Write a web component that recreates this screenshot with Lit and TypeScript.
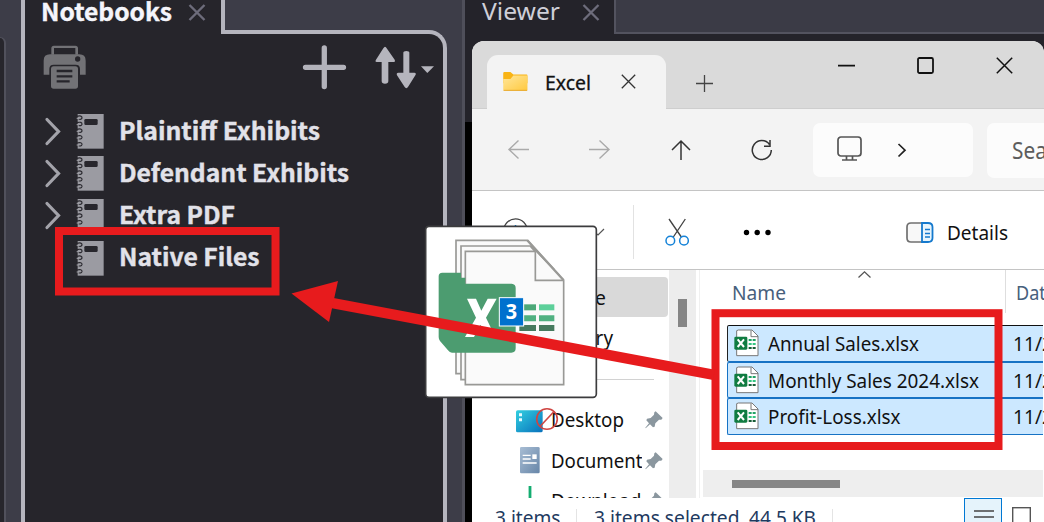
import { LitElement, html, svg, css } from "lit";
import { customElement } from "lit/decorators.js";

/** Single-line label fitted to an exact width; its box is as tall as the capitals. */
const label = (text: string, width: number, cap: number, cls = "ui") => html`
  <svg class="label ${cls}" width=${width} height=${cap}>
    <text x="0" y=${cap} textLength=${width} lengthAdjust="spacingAndGlyphs">${text}</text>
  </svg>`;

const shared = css`
  :host { display: block; box-sizing: border-box; }
  * { box-sizing: border-box; }
  svg { display: block; flex: none; overflow: visible; }
  .label text { fill: #111; font-family: "Noto Sans", "Open Sans", sans-serif; font-size: 20px; }
`;

@customElement("notebook-panel")
class NotebookPanel extends LitElement {
  static styles = [shared, css`
    :host { width: 426px; height: 522px; }
    .frame { display: grid; grid-template-columns: 204px 222px; grid-template-rows: 34px 488px; }
    .tab { width: 204px; background: #26252b; border-left: 4px solid #b5b5be; border-right: 4px solid #b5b5be; height: 30px; padding: 3px 0 0 16px; display: flex; gap: 16px; }
    .tab .label text { font-family: "Noto Sans CJK SC", sans-serif; font-weight: 700; font-size: 24px; fill: #f5f5fb; stroke: #f5f5fb; stroke-width: .4px; }
    .tabrow { grid-column: 1 / 3; display: flex; height: 30px; }
    .body { grid-column: 1 / 3; margin-top: -4px; height: 492px; background: #26252b; border: 4px solid #b5b5be; border-bottom: 0; border-radius: 0 18px 0 0; }
    .opening { width: 196px; height: 5px; margin-top: -5px; background: #26252b; }
    .tools { height: 80px; display: flex; padding: 10.500px 0 0 18px; }
    .add { margin-left: 216.500px; }
    .sort { margin-left: 29px; }
    .row { height: 42.300px; display: flex; padding-left: 18.500px; }
    .row .book { margin-left: 13.500px; }
    .row .label { margin: 8.600px 0 0 14.500px; }
    .row .label text { font-family: "Noto Sans CJK SC", sans-serif; font-weight: 700; font-size: 24px; fill: #e2e2e9; stroke: #e2e2e9; stroke-width: .4px; }
    .chev { margin-top: 1.500px; }
    .hidden { visibility: hidden; }
  `];
  row(text: string, width: number, open = true) {
    return html`<div class="row">
      <svg class="chev ${open ? "" : "hidden"}" width="20" height="30" viewBox="0 0 20 30"><path d="M3 3.500 14.500 15.500 3 27.500" fill="none" stroke="#a3a3aa" stroke-width="3.200" stroke-linecap="round"/></svg>
      <svg class="book" width="27" height="35" viewBox="0 0 81 105">
        <path d="M2 0H80V104H2Z" fill="#9b9ba2"/><rect x="22" y="15" width="40" height="18" rx="4" fill="#28272d"/>
        ${[12, 31, 51, 71, 92].map((y) => svg`<path d="M-1 ${y - 5}Q16 ${y - 9} 15 ${y}Q13 ${y + 6} 5 ${y + 3}" fill="none" stroke="#29282e" stroke-width="3.500"/><path d="M-1 ${y + 1}H8" stroke="#a1a1a8" stroke-width="3"/>`)}
      </svg>
      ${label(text, width, 17.4)}
    </div>`;
  }
  render() {
    return html`<div class="frame">
      <div class="tabrow"><div class="tab">${label("Notebooks", 131, 17.5)}
        <svg width="18" height="18" viewBox="0 0 18 18"><path d="M1.500 2 16.500 17M16.500 2 1.500 17" stroke="#6d6c7b" stroke-width="2.400"/></svg></div></div>
      <div class="body"><div class="opening"></div>
        <div class="tools">
          <svg width="43" height="44" viewBox="130 135 129 132">
            <path d="M155 164V145Q155 137 163 137H227Q235 137 235 145V164H227V144H163V164Z" fill="#727276"/>
            <path d="M132 224V182Q132 163 151 163H239Q258 163 258 182V224H241V207Q241 194 228 194H162Q149 194 149 207V224Z" fill="#727276"/>
            <circle cx="234" cy="177" r="8" fill="#26252b"/><rect x="154" y="199" width="81" height="67" rx="8" fill="#727276"/>
            <path d="M171 213H218M171 229H218M171 244H210" stroke="#26252b" stroke-width="7"/>
          </svg>
          <svg class="add" width="43" height="44" viewBox="0 0 43 44"><path d="M21.300 3V41.500M2.500 22.300H40.500" stroke="#b3b3bb" stroke-width="5.300" stroke-linecap="round"/></svg>
          <svg class="sort" width="60" height="44" viewBox="469 137 180 132"><g fill="#b5b5bd"><path d="M499 142Q502 143 504 147L528 181Q531 188 524 188H509V245Q509 253 499 253T489 245V188H474Q468 187 472 181L494 147Q497 143 499 142Z"/><path d="M563 267Q560 266 558 263L535 228Q532 220 539 220H554V160Q554 155 563 155T572 160V220H587Q594 221 590 228L568 263Q566 266 563 267Z"/><path d="M607 201H646L626 221Z"/></g></svg>
        </div>
        ${this.row("Plaintiff Exhibits", 201, true)}
        ${this.row("Defendant Exhibits", 230, true)}
        ${this.row("Extra PDF", 116, true)}
        ${this.row("Native Files", 140.5, false)}
      </div></div>`;
  }
}

const excelIcon = html`<svg class="xl" width="25" height="28" viewBox="103 83 75 84">
  <path d="M116 86H157L175 104V163H111V88Z" fill="#fff" stroke="#777" stroke-width="3"/><path d="M154 87V106H175" fill="none" stroke="#777" stroke-width="3"/>
  <rect x="104" y="106" width="39" height="39" rx="4" fill="#107c41"/><path d="M114 114 133 137M133 114 114 137" stroke="#fff" stroke-width="6"/>
  <path d="M147 116H156M159 116H168" stroke="#21a366" stroke-width="6"/><path d="M147 128H156M159 128H168" stroke="#33c481" stroke-width="6"/><path d="M147 140H156M159 140H168" stroke="#185c37" stroke-width="6"/></svg>`;
const pin = html`<svg class="pin" width="18" height="18" viewBox="556 121 54 54"><path d="M588 122 609 142 605 147 598 147 587 158 585 168 580 170 571 161 558 173 557 171 568 158 560 149 562 144 573 142 583 132 584 125Z" fill="#8b979f"/></svg>`;

@customElement("file-explorer")
class FileExplorer extends LitElement {
  static styles = [shared, css`
    :host { width: 572px; height: 481px; background: #fff; border-radius: 12px 12px 0 0; overflow: hidden; }
    .title { height: 68px; background: #dadada; border-bottom: 1px solid #cecece; display: flex; }
    .tab { width: 179px; height: 54px; margin: 14px 0 0 14.500px; background: #f3f3f3; border-radius: 11px 11px 0 0; display: flex; padding: 17px 0 0 16px; flex: none; }
    .tab .label { margin: 3px 0 0 17.500px; }
    .tab .label text { font-size: 20.500px; stroke: #111; stroke-width: .3px; }
    .tab .x { margin: 2px 0 0 30px; }
    .plus { margin: 34px 0 0 30.500px; }
    .min { margin: 23.500px 0 0 125px; }
    .max { margin: 16px 0 0 61.500px; }
    .close { margin: 16px 0 0 62.500px; }
    .nav { height: 82px; background: #f3f3f3; border-bottom: 1.500px solid #c4c4c4; display: flex; }
    .nav > svg { margin-top: 30px; }
    .back { margin-left: 35px; } .fwd { margin-left: 60px; } .up { margin-left: 59.500px; } .ref { margin-left: 60.500px; }
    .addr { width: 160px; height: 54px; margin: 13.500px 0 0 41px; background: #fcfcfc; border-radius: 7px; display: flex; padding: 13.500px 0 0 24px; flex: none; }
    .addr .ch { margin: 6.500px 0 0 35px; }
    .search { width: 70px; height: 55.500px; margin: 13.500px 0 0 13.500px; background: #fcfcfc; border-radius: 7px; padding: 19px 0 0 25px; flex: none; }
    .search text { fill: #5d5d5d; font-size: 23px; }
    .bar { height: 79px; border-bottom: 1.500px solid #c4c4c4; display: flex; }
    .new { margin: 27px 0 0 31px; }
    .bar .t1 { margin: 34px 0 0 17px; }
    .nch { margin: 37px 0 0 5px; }
    .sep { width: 1px; height: 54px; margin: 14px 0 0 29px; background: #e2e2e2; }
    .cut { margin: 27px 0 0 31px; }
    .dots { margin: 38px 0 0 52.500px; }
    .det { margin: 30.500px 0 0 135px; }
    .bar .t2 { margin: 35px 0 0 13px; }
    .main { height: 228px; display: flex; overflow: hidden; }
    .side { width: 197px; height: 228px; overflow: hidden; flex: none; padding-top: 7px; }
    .home { margin-left: 10px; width: 186px; height: 40px; border-radius: 4px; background: #d9d9d9; padding: 13.500px 0 0 69px; }
    .gal { height: 62px; padding: 14px 0 0 79px; }
    .line { width: 154px; height: 1px; background: #d2d2d2; margin-left: 28px; }
    .item { height: 40.700px; margin-left: 44px; display: flex; }
    .desk { margin-top: 20px; }
    .item .name { width: 91px; overflow: hidden; padding: 13px 0 0 .5px; height: 38px; margin-left: 8.500px; flex: none; }
    .item .pin { margin: 11px 0 0 3.500px; }
    .vs { width: 27px; background: #ededed; padding: 28.500px 0 0 9px; flex: none; }
    .thumb { width: 8.500px; height: 28.500px; background: #868686; }
    .list { width: 344px; margin-left: 3px; border-left: 1.500px solid #f0f0f0; display: flex; flex-direction: column; flex: none; }
    .head { height: 55px; display: flex; padding-left: 32px; flex: none; }
    .head .label { margin-top: 14.800px; }
    .head text { fill: #47607c; }
    .asc { margin: 1px 0 0 72px; }
    .hs { width: 1px; height: 43px; background: #dedede; margin: 0 10px 0 133.500px; flex: none; }
    .file { height: 36.700px; margin-left: 27px; border: 1px solid #1672c4; border-width: 1px 0 1px 1.500px; border-radius: 2px 0 0 2px; background: #cce8ff; display: flex; padding: 3px 0 0 6px; flex: none; }
    .file.first { border-top: 1.500px solid #111; border-left-color: #222; }
    .file .label { margin: 8px 0 0 8.500px; }
    .fn { width: 245.500px; flex: none; }
    .hbar { margin: 35px 0 0 3px; height: 27px; background: #eee; padding: 9.500px 0 0 28.500px; flex: none; }
    .hthumb { height: 8px; width: 108px; background: #868686; }
    .status { height: 25px; display: flex; }
    .status .label { margin-top: 12.800px; }
    .status text { fill: #1e3a60; }
    .sv { width: 1px; height: 14px; margin-top: 11px; background: #e4e4e4; }
    .view { width: 38px; height: 40px; margin-left: 131px; border: 1.500px solid #0078d4; background: #e5f3fb; padding: 10.500px 0 0 9.500px; flex: none; }
    .sq { margin: 8px 0 0 10px; }
  `];
  file(name: string, w: number, first = false) {
    return html`<div class="file ${first ? "first" : ""}">${excelIcon}<div class="fn">${label(name, w, 14.3)}</div>${label("11/2", 40, 14.3)}</div>`;
  }
  render() {
    return html`
      <div class="title">
        <div class="tab">
          <svg width="25" height="19" viewBox="129 126 75 58"><defs><linearGradient id="f" x2="1" y2="1"><stop stop-color="#ffe69a"/><stop offset="1" stop-color="#ffc93f"/></linearGradient></defs><path d="M129 130Q129 126 133 126H151L160 134H200Q203 134 203 138V160H129Z" fill="#f9b415"/><path d="M129 147H151L160 137H203V180Q203 183 199 183H133Q129 183 129 179Z" fill="url(#f)"/><path d="M130 182H202" stroke="#e7a72c" stroke-width="3"/></svg>
          ${label("Excel", 46, 15)}
          <svg class="x" width="15" height="15"><path d="M.8.800 14.200 14.200M14.200.800.800 14.200" stroke="#333" stroke-width="1.300"/></svg>
        </div>
        <svg class="plus" width="17" height="17"><path d="M8.500 0V17M0 8.500H17" stroke="#444" stroke-width="1.300"/></svg>
        <svg class="min" width="17" height="2"><path d="M0 .6H17" stroke="#111" stroke-width="1.700"/></svg>
        <svg class="max" width="17" height="17"><rect x="1" y="1" width="15" height="15" rx="1.500" fill="none" stroke="#111" stroke-width="1.800"/></svg>
        <svg class="close" width="17" height="17"><path d="M.8.800 16.200 16.200M16.200.800.800 16.200" stroke="#111" stroke-width="1.500"/></svg>
      </div>
      <div class="nav">
        <svg class="back" width="22" height="20"><path d="M22 10.500H2M11.500 1.500 2 10.500 11.500 19.500" fill="none" stroke="#aaa" stroke-width="1.400"/></svg>
        <svg class="fwd" width="22" height="20"><path d="M0 10.500H20M10.500 1.500 20 10.500 10.500 19.500" fill="none" stroke="#aaa" stroke-width="1.400"/></svg>
        <svg class="up" width="20" height="21"><path d="M10 21V2M1 11 10 2 19 11" fill="none" stroke="#333" stroke-width="1.500"/></svg>
        <svg class="ref" width="21" height="21"><path d="M18.500 5.500A9.500 9.500 0 1 0 20.300 11M19 1V7.200H13" fill="none" stroke="#333" stroke-width="1.500"/></svg>
        <div class="addr">
          <svg width="25" height="25"><rect x="1" y="1" width="23" height="19" rx="3" fill="none" stroke="#555" stroke-width="1.700"/><path d="M9.500 20V24M15.500 20V24M5 24H20" stroke="#555" stroke-width="1.700"/></svg>
          <svg class="ch" width="9" height="14"><path d="M1.500 1 8 7.200 1.500 13.500" fill="none" stroke="#222" stroke-width="1.700"/></svg>
        </div>
        <div class="search">${label("Search", 66, 16.5)}</div>
      </div>
      <div class="bar">
        <svg class="new" width="25" height="25"><circle cx="12.500" cy="12.500" r="11.700" fill="none" stroke="#444" stroke-width="1.300"/><path d="M12.500 7V18M7 12.500H18" stroke="#0078d4" stroke-width="1.500"/></svg>
        <div class="t1">${label("New", 40, 15.5)}</div>
        <svg class="nch" width="14" height="8"><path d="M1 1 8 7 14 1" fill="none" stroke="#555" stroke-width="1.200"/></svg>
        <div class="sep"></div>
        <svg class="cut" width="25" height="28" viewBox="196 84 75 84"><path d="M208 87 245 141M257 87 221 141" stroke="#444" stroke-width="4"/><circle cx="212" cy="152" r="13" fill="#fff" stroke="#1683d8" stroke-width="4.500"/><circle cx="253" cy="152" r="13" fill="#fff" stroke="#1683d8" stroke-width="4.500"/></svg>
        <svg class="dots" width="28" height="6"><circle cx="3.500" cy="3.500" r="2.700"/><circle cx="14.200" cy="3.500" r="2.700"/><circle cx="25" cy="3.500" r="2.700"/></svg>
        <svg class="det" width="28" height="21"><path d="M16 1H5Q1 1 1 5V16Q1 20 5 20H16" fill="#f8f8f8" stroke="#707070" stroke-width="1.700"/><path d="M16 1H22Q26.500 1 26.500 5V16Q26.500 20 22 20H16Z" fill="#e8f5fc" stroke="#1579cd" stroke-width="1.800"/><path d="M19 7.500H24M19 11.500H24M19 15H24" stroke="#1579cd" stroke-width="1.300"/></svg>
        <div class="t2">${label("Details", 61, 14.3)}</div>
      </div>
      <div class="main">
        <div class="side">
          <div class="home">${label("Home", 55, 14.3)}</div>
          <div class="gal">${label("Gallery", 62, 14.3)}</div>
          <div class="line"></div>
          <div class="item desk">
            <svg width="26" height="41" viewBox="168 103 78 123"><defs><linearGradient id="d" x2="1" y2="1"><stop stop-color="#32cfe0"/><stop offset="1" stop-color="#0871bc"/></linearGradient></defs><rect x="168" y="134" width="80" height="66" rx="5" fill="url(#d)"/><path d="M177 143H186V152H177ZM177 158H186V167H177Z" fill="#e9fbff"/></svg>
            <div class="name">${label("Desktop", 73, 14.3)}</div>${pin}
          </div>
          <div class="item">
            <svg width="26" height="41" viewBox="168 212 78 123"><defs><linearGradient id="o" x2="1" y2="1"><stop stop-color="#a8bdd4"/><stop offset="1" stop-color="#6786a8"/></linearGradient></defs><rect x="180" y="230" width="59" height="79" rx="4" fill="url(#o)"/><path d="M188 255H212M188 266H212M188 278H230" stroke="#fff" stroke-width="4"/><rect x="217" y="252" width="13" height="14" fill="#fff"/></svg>
            <div class="name">${label("Documents", 100.5, 14.3)}</div>${pin}
          </div>
          <div class="item">
            <svg width="26" height="41"><path d="M14 5V27M7 20 14 27 21 20" fill="none" stroke="#14ad71" stroke-width="2.800"/></svg>
            <div class="name">${label("Downloads", 99.5, 14.3)}</div>${pin}
          </div>
        </div>
        <div class="vs"><div class="thumb"></div></div>
        <div class="list">
          <div class="head">${label("Name", 54, 14.5)}
            <svg class="asc" width="13" height="7"><path d="M.5 6.500 6.500.8 12.500 6.500" fill="none" stroke="#555" stroke-width="1.300"/></svg>
            <div class="hs"></div>${label("Date", 40, 14.5)}</div>
          ${this.file("Annual Sales.xlsx", 151, true)}
          ${this.file("Monthly Sales 2024.xlsx", 211, false)}
          ${this.file("Profit-Loss.xlsx", 132.5, false)}
          <div class="hbar"><div class="hthumb"></div></div>
        </div>
      </div>
      <div class="status">
        <svg width="23" height="1"></svg>${label("3 items", 65.5, 14.3)}<svg width="15.500" height="1"></svg><div class="sv"></div>
        <svg width="16.500" height="1"></svg>${label("3 items selected", 145.500, 14.3)}<svg width="9.500" height="1"></svg>${label("44.5 KB", 67, 14.3)}<svg width="16" height="1"></svg><div class="sv"></div>
        <div class="view"><svg width="20" height="13"><path d="M0 1H20M0 7H20M0 13H20" stroke="#444" stroke-width="1.300"/></svg></div>
        <svg class="sq" width="19" height="20"><rect x=".7" y="1.700" width="17.600" height="18" fill="#fff" stroke="#555" stroke-width="1.400"/></svg>
      </div>`;
  }
}

@customElement("app-root")
class AppRoot extends LitElement {
  static styles = [shared, css`
    :host { width: 1044px; height: 522px; position: relative; overflow: hidden; background: #3d3d48; }
    .shell { display: flex; height: 522px; }
    .edge { width: 6px; height: 490px; margin: 37px 15px 0 0; background: #27262c; border: 2px solid #51515c; border-width: 1.500px 2px 0 0; border-radius: 0 7px 0 0; flex: none; }
    notebook-panel { flex: none; }
    .viewer { margin-left: 15px; width: 582px; background: #000; border-left: 3px solid #4f4f5a; flex: none; }
    .vtop { height: 122px; background: #24232a; }
    .vtabs { height: 34px; display: flex; }
    .vtab { width: 149px; padding: 3px 0 0 16.500px; display: flex; gap: 22px; flex: none; }
    .vtab .label text { font-size: 24px; fill: #cfcfd8; }
    .vrest { flex: 1; background: #3b3b46; border-left: 2px solid #53535f; border-bottom: 2px solid #53535f; }
    file-explorer { position: absolute; left: 472px; top: 41px; }
    .overlay { position: absolute; left: 0; top: 0; }
    .badge { fill: #fff; font: 700 66px "Noto Sans", sans-serif; }
  `];
  render() {
    return html`
      <div class="shell">
        <div class="edge"></div>
        <notebook-panel></notebook-panel>
        <div class="viewer"><div class="vtop"><div class="vtabs">
          <div class="vtab">${label("Viewer", 78, 17.3)}<svg width="18" height="18"><path d="M1.500 2 16.500 17M16.500 2 1.500 17" stroke="#6d6c7b" stroke-width="2.300"/></svg></div>
          <div class="vrest"></div></div></div></div>
      </div>
      <file-explorer></file-explorer>
      <svg class="overlay" width="1044" height="522" viewBox="0 0 1044 522">
        <g fill="none" stroke="#cf4542" stroke-width="1.600"><circle cx="547" cy="419" r="10.300"/><path d="M540 426.500 554 411.500"/></g>
        <g transform="translate(400 190) scale(.333333)">
          <rect x="77" y="109" width="512" height="513" rx="10" fill="#fff" stroke="#3c3c3e" stroke-width="5"/>
          <g fill="#fafafa" stroke="#999996" stroke-width="5">
            <path d="M168 151H382L462 238V551H168Z"/><path d="M183 168H392L477 255V569H183Z"/>
            <path d="M196 184H406L491 271V584H196Z"/><path d="M406 184V271H491"/>
            <path d="M382 151 491 271M392 168 406 184" fill="none" stroke-width="7"/>
          </g>
          <path d="M127 248H183V263H196V281H335Q347 282 347 294V475Q347 488 334 488H156Q149 488 144 481L120 453Q116 448 116 441V259Q116 248 127 248Z" fill="#4c9c70"/>
          <path d="M201 326H228L244 362 263 326H290L258 383 286 441H258L241 404 222 441H195L228 383Z" fill="#fff"/>
          <path d="M370 352H408" stroke="#4ca878" stroke-width="18"/><path d="M417 352H463" stroke="#5dd09a" stroke-width="18"/><path d="M358 385H408M417 385H463" stroke="#50b181" stroke-width="18"/><path d="M358 414H408M417 414H463" stroke="#467a5e" stroke-width="18"/>
          <rect x="298" y="323" width="73" height="85" fill="#0071ce" stroke="#fff" stroke-width="3"/>
          <text class="badge" x="334" y="388" text-anchor="middle" textLength="34" lengthAdjust="spacingAndGlyphs">3</text>
        </g>
        <g fill="none" stroke="#e71b1d"><rect x="59" y="231" width="216.500" height="60.500" stroke-width="8"/><rect x="715.500" y="313.200" width="283" height="132.800" stroke-width="8"/><path d="M330 302.700 714 374.800" stroke-width="10.500"/></g>
        <path d="M291.500 293.500 338 281 329 322Z" fill="#e71b1d"/>
      </svg>`;
  }
}
